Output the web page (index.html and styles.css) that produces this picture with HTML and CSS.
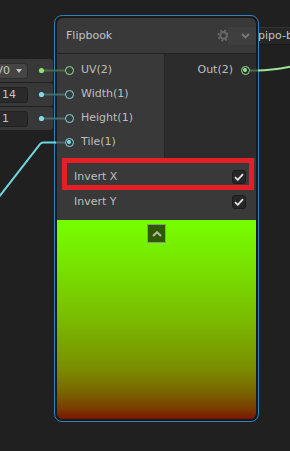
FILE: index.html
```html
<!DOCTYPE html>
<html>
<head>
<meta charset="utf-8">
<link rel="stylesheet" href="styles.css">
</head>
<body>
<div class="canvas">
  <div class="left-ports">
    <div class="left-row"><div class="field dropdown"><span class="ftext">UV0</span><span class="tri"></span></div></div>
    <div class="left-row"><div class="field num">14</div></div>
    <div class="left-row"><div class="field num">1</div></div>
  </div>

  <div class="side-field"><span>pipo-b</span></div>

  <div class="node">
    <div class="node-inner">
      <div class="header">
        <span class="title">Flipbook</span>
        <svg class="gear" width="13" height="13" viewBox="0 0 16 16">
          <circle cx="8" cy="8" r="4.1" fill="none" stroke="#666" stroke-width="2.6"/>
          <circle cx="8" cy="8" r="6.1" fill="none" stroke="#666" stroke-width="2.6" stroke-dasharray="2.4 2.39"/>
        </svg>
        <span class="menu">
          <svg width="9" height="6" viewBox="0 0 9 6"><path d="M1 1 L4.5 4.5 L8 1" fill="none" stroke="#7a7a7a" stroke-width="1.8"/></svg>
        </span>
      </div>
      <div class="columns">
        <div class="inputs">
          <div class="in-row"><span class="port green"></span><span class="label">UV(2)</span></div>
          <div class="in-row"><span class="port cyan"></span><span class="label">Width(1)</span></div>
          <div class="in-row"><span class="port cyan"></span><span class="label">Height(1)</span></div>
          <div class="in-row"><span class="port cyan on"></span><span class="label">Tile(1)</span></div>
        </div>
        <div class="outputs">
          <div class="out-row"><span class="label">Out(2)</span><span class="port green on"></span></div>
        </div>
      </div>
      <div class="settings">
        <div class="set-row highlighted"><span class="label">Invert X</span><span class="check"><svg width="10" height="8" viewBox="0 0 10 8"><path d="M1 4.2 L3.8 6.8 L9 1.2" fill="none" stroke="#e4e4e4" stroke-width="1.8"/></svg></span></div>
        <div class="set-row"><span class="label">Invert Y</span><span class="check"><svg width="10" height="8" viewBox="0 0 10 8"><path d="M1 4.2 L3.8 6.8 L9 1.2" fill="none" stroke="#e4e4e4" stroke-width="1.8"/></svg></span></div>
      </div>
      <div class="preview">
        <span class="collapse"><svg width="10" height="6" viewBox="0 0 10 6"><path d="M1 5 L5 1.2 L9 5" fill="none" stroke="#b4b8ac" stroke-width="2"/></svg></span>
      </div>
    </div>
  </div>

  <svg class="wires" width="290" height="451" viewBox="0 0 290 451">
    <line x1="44" y1="70.5" x2="65" y2="70.5" stroke="#4d6a4d" stroke-width="2"/>
    <line x1="44" y1="94.5" x2="65" y2="94.5" stroke="#4b6a6d" stroke-width="2"/>
    <line x1="44" y1="118.5" x2="65" y2="118.5" stroke="#4b6a6d" stroke-width="2"/>
    <line x1="55" y1="142.5" x2="65" y2="142.5" stroke="#4b6a6d" stroke-width="2"/>
    <path d="M-1 197 L40 144.2 Q41.3 142.5 43.5 142.5 L56 142.5" fill="none" stroke="#6fd6e2" stroke-width="2"/>
    <circle cx="41.5" cy="70.5" r="2.6" fill="#88e26c"/>
    <circle cx="41.5" cy="94.5" r="2.6" fill="#7fdbe5"/>
    <circle cx="41.5" cy="118.5" r="2.6" fill="#7fdbe5"/>
    <line x1="250" y1="70.5" x2="258" y2="70.5" stroke="#4d6a4d" stroke-width="2"/>
    <path d="M258 70.5 C268 70.5 278 69 291 66.5" fill="none" stroke="#9ce69c" stroke-width="2"/>
  </svg>
</div>
</body>
</html>
```
FILE: styles.css
```css
* { box-sizing: border-box; }
html, body { margin: 0; padding: 0; }
body {
  width: 290px;
  height: 451px;
  overflow: hidden;
  background: #202020;
  font-family: "DejaVu Sans", sans-serif;
  font-size: 11px;
  line-height: 16px;
  color: #bebebe;
}
.canvas { position: relative; width: 290px; height: 451px; overflow: hidden; }

/* left inline port fields */
.left-ports {
  position: absolute;
  left: 0;
  top: 59px;
  width: 53px;
  display: flex;
  flex-direction: column;
  gap: 1px;
  z-index: 1;
}
.left-row {
  height: 23px;
  background: #383838;
  border-radius: 0 3px 3px 0;
  display: flex;
  align-items: center;
}
.field {
  height: 16px;
  width: 31px;
  margin-left: -3px;
  border-radius: 3px;
  display: flex;
  align-items: center;
  overflow: hidden;
  color: #c4c4c4;
}
.field.num { background: #2a2a2a; border: 1px solid #212121; padding-left: 4px; }
.field.dropdown {
  background: #444;
  border: 1px solid #2e2e2e;
  justify-content: flex-end;
  padding-right: 5px;
  gap: 6px;
}
.ftext { white-space: nowrap; flex: none; }
.tri {
  flex: none;
  width: 0; height: 0;
  border-left: 3.5px solid transparent;
  border-right: 3.5px solid transparent;
  border-top: 4px solid #c4c4c4;
}

/* field behind the node on the right */
.side-field {
  position: absolute;
  left: 230px;
  top: 27px;
  width: 70px;
  height: 18px;
  background: #262626;
  border-top: 1px solid #333;
  border-bottom: 1px solid #1a1a1a;
  padding-left: 28px;
  display: flex;
  align-items: center;
  color: #c4c4c4;
  white-space: nowrap;
  z-index: 1;
}

/* node */
.node {
  position: absolute;
  left: 54px;
  top: 15px;
  width: 205px;
  height: 407px;
  border: 1px solid #2c84bf;
  border-radius: 8px;
  background: #1a1a1a;
  padding: 2px;
  z-index: 2;
}
.node-inner {
  height: 100%;
  border-radius: 6px;
  overflow: hidden;
  display: flex;
  flex-direction: column;
  background: #393939;
}
.header {
  height: 36px;
  flex: none;
  border-bottom: 1px solid #232323;
  display: flex;
  align-items: center;
  padding-left: 9px;
}
.title { flex: 1; color: #c2c2c2; }
.gear { flex: none; margin-right: -2px; }
.menu {
  flex: none;
  width: 28px;
  height: 18px;
  background: #3f3f3f;
  display: flex;
  align-items: center;
  justify-content: center;
  padding-left: 6px;
}

.columns { display: flex; height: 104px; flex: none; }
.inputs {
  width: 108px;
  background: #393939;
  border-right: 1px solid #262626;
  padding: 4px 0;
}
.outputs { flex: 1; background: #2c2c2c; padding: 4px 0; }
.in-row {
  height: 24px;
  display: flex;
  align-items: center;
  padding-left: 8px;
  gap: 7px;
}
.out-row {
  height: 24px;
  display: flex;
  align-items: center;
  justify-content: flex-end;
  padding-right: 6px;
  gap: 8px;
}
.port {
  width: 9px;
  height: 9px;
  border-radius: 50%;
  border: 1.5px solid #8ee08e;
  position: relative;
  flex: none;
}
.port.green { border-color: #93e593; }
.port.cyan { border-color: #84dde6; }
.port.on::after {
  content: "";
  position: absolute;
  left: 1px; top: 1px;
  width: 4px; height: 4px;
  border-radius: 50%;
  background: currentColor;
}
.port.green.on { color: #93e593; }
.port.cyan.on { color: #84dde6; }

.settings { flex: none; background: #393939; padding: 6px 0; }
.set-row {
  height: 25px;
  display: flex;
  align-items: center;
  justify-content: space-between;
  padding: 0 10px 0 17px;
  position: relative;
}
.set-row.highlighted::after {
  content: "";
  position: absolute;
  left: 5px;
  right: 2px;
  top: -6px;
  bottom: -1px;
  border: 5px solid #e41f26;
}
.check {
  width: 14px;
  height: 14px;
  background: #262626;
  border: 1px solid #1c1c1c;
  border-radius: 3px;
  display: flex;
  align-items: center;
  justify-content: center;
}

.preview {
  flex: 1;
  background: linear-gradient(to bottom, #76ff00 0%, #78e000 25%, #79bb00 50%, #7a8d00 75%, #7a6200 87%, #7a3c00 95%, #7a1300 100%);
  display: flex;
  justify-content: center;
  align-items: flex-start;
  padding-top: 4px;
}
.collapse {
  width: 19px;
  height: 19px;
  background: #2d5900;
  border: 1px solid #8d9a82;
  display: flex;
  align-items: center;
  justify-content: center;
}

.wires { position: absolute; left: 0; top: 0; z-index: 3; }
```
